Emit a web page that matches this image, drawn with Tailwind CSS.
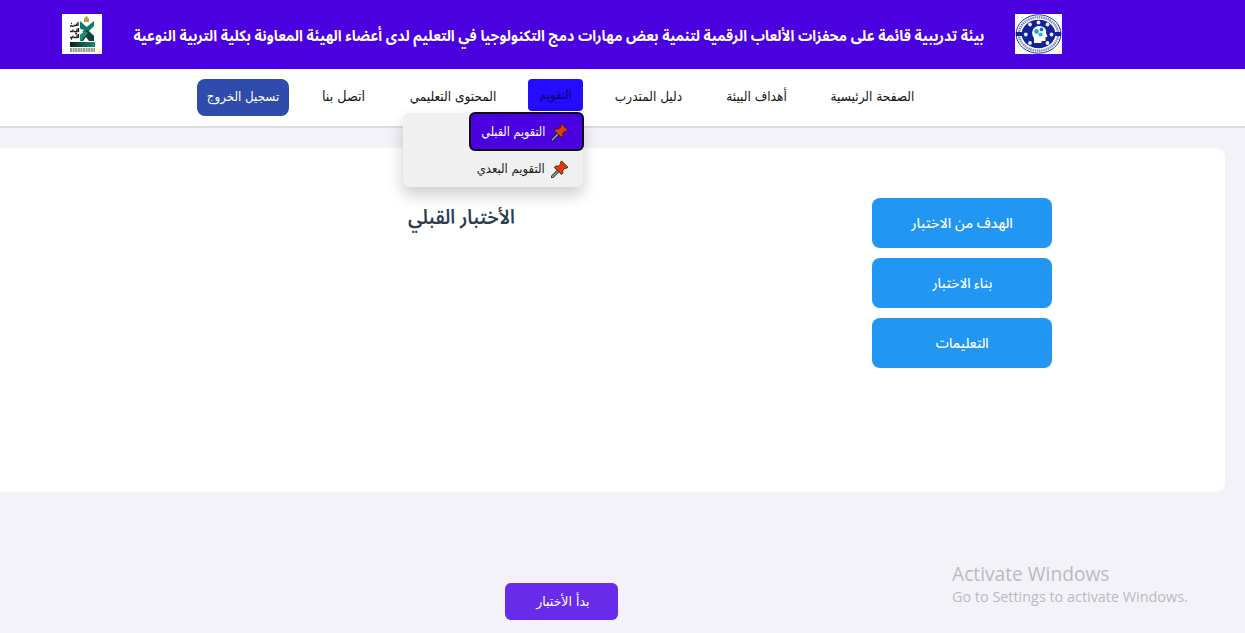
<!DOCTYPE html>
<html lang="ar">
<head>
<meta charset="utf-8">
<title>التقويم القبلي</title>
<script src="https://cdn.jsdelivr.net/npm/@tailwindcss/browser@4"></script>
</head>
<body class="w-[1245px] h-[633px] overflow-hidden bg-[#f3f2f8] flex flex-col whitespace-nowrap text-[13.5px] leading-5 font-['DejaVu_Sans_Condensed','DejaVu_Sans',sans-serif]">
<svg class="hidden">
  <symbol id="pin" viewBox="0 0 18 18">
    <path d="M1 17 7.500 10.500" stroke="#222" stroke-width="3" stroke-linecap="round"/>
    <path d="M1.300 16.700 7.300 10.700" stroke="#9eabb5" stroke-width="1.300" stroke-linecap="round"/>
    <path d="M10.600 1 17 7.200 15.700 8.300 13.800 8.200 11.800 10.400 11.900 13.300 10.300 14.400 3.300 7.500 4.600 6 7.500 6 9.900 3.900 9.600 2Z" fill="#df3c0b" stroke="#2c1712" stroke-width=".8" stroke-linejoin="round"/>
  </symbol>
</svg>
<header class="h-[69px] shrink-0 bg-[#4b00e0] flex items-start">
  <svg class="ml-[62px] mt-[14px] w-10 h-10 shrink-0" viewBox="0 0 40 40">
    <path fill="#fff" d="M0 0h40v40H0z"/>
    <path d="M22 5q2.500-4 5 0v3h-5z" fill="#c19a43"/><circle cx="24.500" cy="3.500" r="1.200" fill="#c19a43"/>
    <path d="M18 7l6.500 6L32 7v5l-5 5 5 5v5l-9-6-5-7z" fill="#0e7a66"/>
    <path d="M18 21l7-5 7 6v5h-5l-3-4-3 4h-3z" fill="#123e35"/>
    <path d="M18 21l5-4 3 2-7 8h-1z" fill="#178e76"/>
    <path d="M19 15l3 1-2 2zM29 15l3 1-2 2z" fill="#fff"/>
    <path d="M8 12h2q1 1 2-.5h2.500v-2M16 8v4M8 17.500h3v-2M12 17.500h3v-3M16.500 14v4M8 23.500h3v-2M12 23.500h3v-3M16.500 20v4M9 9.500h1M13 19.500h2M9 25h1" fill="none" stroke="#222" stroke-width="1.300"/>
    <defs><linearGradient id="g"><stop stop-color="#06231f"/><stop offset="1" stop-color="#168d77"/></linearGradient></defs>
    <path d="M8 28h25v5H8z" fill="url(#g)"/>
    <path d="M8 35h25M8 37h25" stroke="#333" stroke-width="1.200" stroke-dasharray="2 .6"/>
  </svg>
  <h1 dir="rtl" class="ml-[31px] w-[851px] h-[69px] shrink-0 flex items-center justify-center pt-[2px] text-white font-bold text-[15.200px] font-['Noto_Sans_Arabic']"><span class="block shrink-0 scale-x-[0.927]">بيئة تدريبية قائمة على محفزات الألعاب الرقمية لتنمية بعض مهارات دمج التكنولوجيا في التعليم لدى أعضاء الهيئة المعاونة بكلية التربية النوعية</span></h1>
  <svg class="ml-[31px] mt-[14px] w-[47px] h-10 shrink-0" viewBox="0 0 47 40">
    <path fill="#fff" d="M0 0h47v40H0z"/>
    <ellipse cx="23.500" cy="20" rx="22.400" ry="19.200" fill="#fff" stroke="#2438a0" stroke-width="1"/>
    <ellipse cx="23.500" cy="20" rx="19.700" ry="16.700" fill="none" stroke="#7d87c6" stroke-width="2.400" stroke-dasharray="1.500 .7"/>
    <ellipse cx="23.500" cy="20" rx="16.800" ry="14.200" fill="#15219b"/>
    <path d="M1 18h6v4H1zM40 18h6v4h-6z" fill="#15219b"/>
    <g fill="#dff3ff"><circle cx="15" cy="10.500" r="1.900"/><circle cx="23.500" cy="8.500" r="1.900"/><circle cx="32.500" cy="10.500" r="1.900"/><circle cx="10.800" cy="20.500" r="1.900"/><circle cx="36.500" cy="20.500" r="1.900"/><circle cx="15" cy="29" r="1.900"/><circle cx="32.500" cy="29" r="1.900"/></g>
    <path d="M19 29v-5c-4-5-1-12 5-12 6 0 8 4 7 7l1.500 3.500-2 1v3.500h-4v2z" fill="#fff"/>
    <circle cx="21.500" cy="17.500" r="2.400" fill="#21a9cb"/><circle cx="26.500" cy="15.500" r="1.900" fill="#1478ba"/><circle cx="25.500" cy="20.500" r="2.100" fill="#25b6cf"/>
  </svg>
</header>
<nav dir="rtl" class="h-[59px] shrink-0 border-b-2 border-[#dcdcde] bg-white flex items-start pt-[10px] pr-[330px] text-[#161616]">
  <a class="w-[85px] pt-[7px] flex justify-center">الصفحة الرئيسية</a>
  <a class="w-[61px] mr-[43px] pt-[7px] flex justify-center">أهداف البيئة</a>
  <a class="w-[67px] mr-[44px] pt-[7px] flex justify-center">دليل المتدرب</a>
  <div class="relative z-10 w-[55px] mr-[32px]">
    <a class="h-[32px] rounded bg-[#230cff] text-[#0b0564] flex items-center justify-center text-[12.5px]">التقويم</a>
    <div class="absolute right-0 top-[34px] w-[180px] h-[74px] rounded-md bg-[#f0f0f0] shadow-[0_8px_16px_rgba(0,0,0,0.2)] text-[12.7px]">
      <a class="relative -right-px -top-px w-[115px] h-[39px] rounded-md border-2 border-[#0c0820] bg-[#4b00e0] text-white flex items-center pr-[13px] gap-[6px]"><svg class="w-[18px] h-[18px] shrink-0"><use href="#pin"/></svg><span class="origin-right scale-x-[0.98]">التقويم القبلي</span></a>
      <a class="h-[36px] -mt-px flex items-center pr-[14px] gap-[6px] text-[#222]"><svg class="w-[18px] h-[18px] shrink-0"><use href="#pin"/></svg><span class="origin-right scale-x-[1.02]">التقويم البعدي</span></a>
    </div>
  </div>
  <a class="w-[86px] mr-[32px] pt-[7px] flex justify-center">المحتوى التعليمي</a>
  <a class="w-[45px] mr-[44px] pt-[7px] flex justify-center text-[14.2px]">اتصل بنا</a>
  <a class="w-[92px] h-[37px] mr-[32px] pb-[2px] rounded-lg bg-[#2f4bab] text-white flex items-center justify-center text-[13.2px]">تسجيل الخروج</a>
</nav>
<main class="mt-5 w-[1225px] h-[344px] shrink-0 rounded-r-[10px] bg-white flex items-start font-['Noto_Sans_Arabic']">
  <h2 dir="rtl" class="ml-[361px] mt-[55px] w-[200px] h-[30px] flex items-center justify-center text-[20px] font-semibold text-[#2c3e50]"><span class="block scale-x-[0.93]">الأختبار القبلي</span></h2>
  <div dir="rtl" class="ml-[311px] mt-[50px] w-[180px] flex flex-col gap-[10px] text-[14px] font-medium text-white">
    <button class="h-[50px] pt-[2px] rounded-lg bg-[#2196f3]">الهدف من الاختبار</button>
    <button class="h-[50px] pt-[2px] rounded-lg bg-[#2196f3]"><span class="inline-block scale-x-[0.95]">بناء الاختبار</span></button>
    <button class="h-[50px] pt-[2px] rounded-lg bg-[#2196f3]"><span class="inline-block scale-x-[0.94]">التعليمات</span></button>
  </div>
</main>
<footer class="flex-1 flex items-start">
  <button dir="rtl" class="ml-[505px] mt-[91px] w-[113px] h-[37px] pb-[2px] pl-[2px] rounded-md bg-[#692bea] text-white"><span class="inline-block scale-x-[1.03]">بدأ الأختبار</span></button>
  <div class="ml-[334px] mt-[69px] font-['Open_Sans'] text-[#bbbabf]">
    <p class="text-[19.2px] leading-[26px]">Activate Windows</p>
    <p class="text-[14.4px] leading-[19px]">Go to Settings to activate Windows.</p>
  </div>
</footer>
</body>
</html>
